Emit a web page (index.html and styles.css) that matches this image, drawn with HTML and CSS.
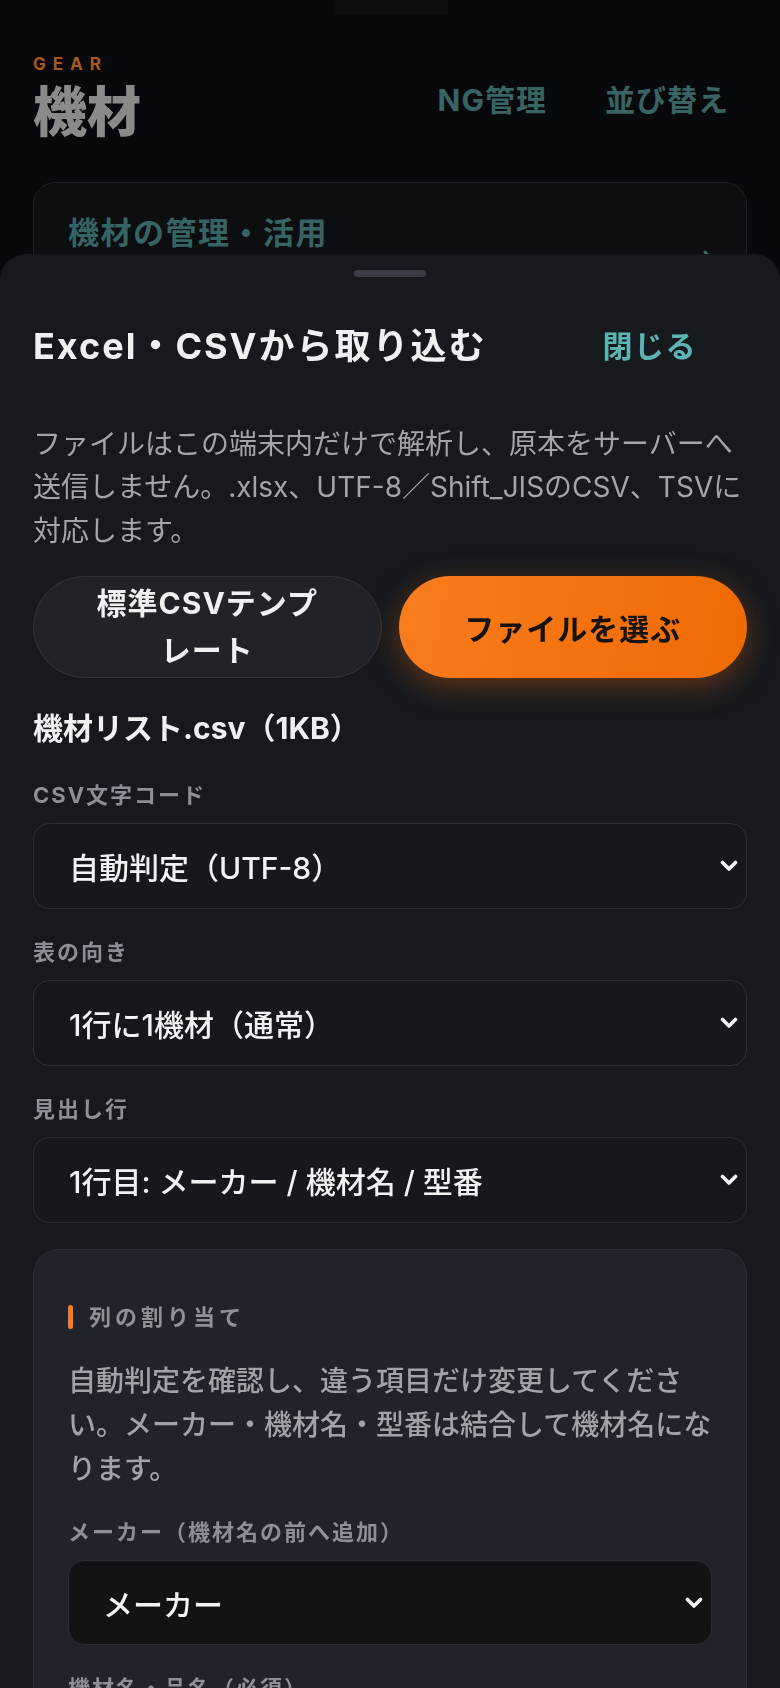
FILE: index.html
```html
<!DOCTYPE html>
<html lang="ja">
<head>
    <meta charset="UTF-8">
    <meta name="viewport" content="width=device-width, initial-scale=1.0">
    <title>機材 - Excel・CSVから取り込む</title>
    <link rel="stylesheet" href="styles.css">
</head>
<body>
    <!-- page behind the sheet -->
    <div class="page">
        <div class="notch"></div>
        <header class="page-head">
            <div class="page-title">
                <div class="eyebrow">GEAR</div>
                <h1>機材</h1>
            </div>
            <nav class="page-actions">
                <a href="#">NG管理</a>
                <a href="#">並び替え</a>
            </nav>
        </header>
        <section class="menu-card">
            <h3>機材の管理・活用</h3>
            <svg class="menu-arrow" width="14" height="24" viewBox="0 0 14 24"><path d="M3 3l8 9-8 9" fill="none" stroke="currentColor" stroke-width="3" stroke-linecap="round" stroke-linejoin="round"/></svg>
        </section>
    </div>

    <!-- import sheet -->
    <div class="sheet">
        <div class="handle"></div>
        <div class="sheet-head">
            <h2>Excel・CSVから取り込む</h2>
            <button class="close-btn">閉じる</button>
        </div>
        <p class="sheet-note">ファイルはこの端末内だけで解析し、原本をサーバーへ送信しません。.xlsx、UTF-8／Shift_JISのCSV、TSVに対応します。</p>

        <div class="sheet-buttons">
            <button class="btn-ghost">標準CSVテンプレート</button>
            <button class="btn-primary">ファイルを選ぶ</button>
        </div>

        <div class="file-name">機材リスト.csv（1KB）</div>

        <div class="field">
            <label>CSV文字コード</label>
            <div class="select">
                <span>自動判定（UTF-8）</span>
                <svg width="18" height="12" viewBox="0 0 18 12"><path d="M2.5 2.5l6.5 6.5 6.5-6.5" fill="none" stroke="currentColor" stroke-width="3.6" stroke-linecap="round" stroke-linejoin="round"/></svg>
            </div>
        </div>

        <div class="field">
            <label>表の向き</label>
            <div class="select">
                <span>1行に1機材（通常）</span>
                <svg width="18" height="12" viewBox="0 0 18 12"><path d="M2.5 2.5l6.5 6.5 6.5-6.5" fill="none" stroke="currentColor" stroke-width="3.6" stroke-linecap="round" stroke-linejoin="round"/></svg>
            </div>
        </div>

        <div class="field">
            <label>見出し行</label>
            <div class="select">
                <span>1行目: メーカー / 機材名 / 型番</span>
                <svg width="18" height="12" viewBox="0 0 18 12"><path d="M2.5 2.5l6.5 6.5 6.5-6.5" fill="none" stroke="currentColor" stroke-width="3.6" stroke-linecap="round" stroke-linejoin="round"/></svg>
            </div>
        </div>

        <div class="mapping">
            <h4 class="mapping-title">列の割り当て</h4>
            <p class="mapping-note">自動判定を確認し、違う項目だけ変更してください。メーカー・機材名・型番は結合して機材名になります。</p>

            <div class="field">
                <label>メーカー（機材名の前へ追加）</label>
                <div class="select select-dark">
                    <span>メーカー</span>
                    <svg width="18" height="12" viewBox="0 0 18 12"><path d="M2.5 2.5l6.5 6.5 6.5-6.5" fill="none" stroke="currentColor" stroke-width="3.6" stroke-linecap="round" stroke-linejoin="round"/></svg>
                </div>
            </div>

            <div class="field">
                <label>機材名・品名（必須）</label>
                <div class="select select-dark">
                    <span>機材名</span>
                    <svg width="18" height="12" viewBox="0 0 18 12"><path d="M2.5 2.5l6.5 6.5 6.5-6.5" fill="none" stroke="currentColor" stroke-width="3.6" stroke-linecap="round" stroke-linejoin="round"/></svg>
                </div>
            </div>
        </div>
    </div>
</body>
</html>
```

FILE: styles.css
```css
* {
    box-sizing: border-box;
}

body {
    margin: 0;
    background-color: #08090c;
    font-family: Inter, "Noto Sans CJK JP", sans-serif;
    color: #eef0f2;
    height: 1688px;
    overflow: hidden;
}

button {
    font-family: inherit;
    cursor: pointer;
}

/* page behind (already dimmed) */
.page {
    padding: 54px 33px 0;
}

.notch {
    position: absolute;
    top: 0;
    left: 334px;
    width: 114px;
    height: 15px;
    background-color: #0c0e11;
}

.page-head {
    display: flex;
    justify-content: space-between;
    align-items: flex-start;
}

.eyebrow {
    font-size: 17px;
    line-height: 20px;
    font-weight: 700;
    letter-spacing: 7px;
    color: #a85a1d;
}

.page-title h1 {
    margin: 9px 0 0;
    font-size: 54px;
    line-height: 59px;
    font-weight: 900;
    color: #8a8a8b;
}

.page-actions {
    display: flex;
    gap: 58px;
    margin-top: 26px;
    margin-right: 18px;
}

.page-actions a {
    font-size: 30px;
    line-height: 40px;
    font-weight: 700;
    letter-spacing: 1px;
    color: #386464;
    text-decoration: none;
}

.menu-card {
    margin-top: 40px;
    height: 120px;
    border: 1px solid #1d2024;
    border-radius: 22px;
    background-color: #0c0e11;
    padding: 30px 34px;
    display: flex;
    justify-content: space-between;
}

.menu-card h3 {
    margin: 0;
    font-size: 31px;
    line-height: 40px;
    font-weight: 700;
    letter-spacing: 1.5px;
    color: #366363;
}

.menu-arrow {
    color: #3a6a6a;
    margin-top: 36px;
    margin-right: -4px;
}

/* bottom sheet */
.sheet {
    position: fixed;
    top: 254px;
    left: 0;
    right: 0;
    bottom: 0;
    overflow: hidden;
    background-color: #16191e;
    border-radius: 26px 26px 0 0;
    padding: 16px 33px 0;
}

.handle {
    width: 72px;
    height: 7px;
    margin: 0 auto 41px;
    border-radius: 4px;
    background-color: #3a3d45;
}

.sheet-head {
    display: flex;
    justify-content: space-between;
    align-items: center;
    padding-right: 26px;
}

.sheet-head h2 {
    margin: 0;
    font-size: 36px;
    line-height: 47px;
    font-weight: 700;
    letter-spacing: 2px;
    color: #eef0f2;
}

.close-btn {
    background: none;
    border: none;
    padding: 8px 24px;
    font-size: 30px;
    line-height: 40px;
    font-weight: 700;
    letter-spacing: 1.5px;
    color: #5cb5b3;
}

.sheet-note {
    margin: 49px 0 0;
    font-size: 28px;
    line-height: 1.55;
    color: #a2a5aa;
}

.sheet-buttons {
    display: grid;
    grid-template-columns: 1fr 1fr;
    gap: 17px;
    margin-top: 23px;
}

.btn-ghost,
.btn-primary {
    min-height: 101px;
    border-radius: 51px;
    font-size: 30px;
    font-weight: 700;
    letter-spacing: 1px;
}

.btn-ghost {
    background-color: #202328;
    border: 1px solid #32353c;
    color: #eef0f2;
    line-height: 47px;
    padding: 3px 56px;
}

.btn-primary {
    background: linear-gradient(100deg, #f97c1e, #ef6a02);
    border: none;
    color: #16130f;
    box-shadow: 0 8px 30px rgba(240, 110, 20, 0.35);
}

.file-name {
    margin-top: 29px;
    font-size: 30px;
    line-height: 42px;
    font-weight: 700;
    color: #eef0f2;
}

.field {
    margin-top: 27px;
}

.file-name + .field {
    margin-top: 30px;
}

.field label {
    display: block;
    font-size: 22px;
    line-height: 32px;
    font-weight: 700;
    letter-spacing: 2px;
    color: #8c8f95;
    margin-bottom: 12px;
}

.select {
    height: 86px;
    border: 1px solid #2d3037;
    border-radius: 16px;
    background-color: #15181d;
    display: flex;
    align-items: center;
    justify-content: space-between;
    padding: 0 8px 0 35px;
    font-size: 30px;
    font-weight: 500;
    color: #f1f2f4;
}

.select svg {
    color: #f4f5f6;
}

/* column mapping card */
.mapping {
    margin-top: 26px;
    border: 1px solid #2b2e35;
    border-radius: 26px;
    background-color: #202329;
    padding: 51px 34px 34px;
}

.mapping-title {
    margin: 0;
    display: flex;
    align-items: center;
    gap: 16px;
    font-size: 22px;
    line-height: 32px;
    font-weight: 700;
    letter-spacing: 4px;
    color: #8e9196;
}

.mapping-title::before {
    content: "";
    width: 5px;
    height: 24px;
    border-radius: 3px;
    background-color: #f97c1e;
}

.mapping-note {
    margin: 26px 0 0;
    font-size: 28px;
    line-height: 44px;
    font-weight: 500;
    color: #a0a3a8;
}

.mapping .field:first-of-type {
    margin-top: 25px;
}

.select-dark {
    height: 85px;
    background-color: #111317;
    border-color: #2a2d33;
    padding-left: 34px;
}
```
